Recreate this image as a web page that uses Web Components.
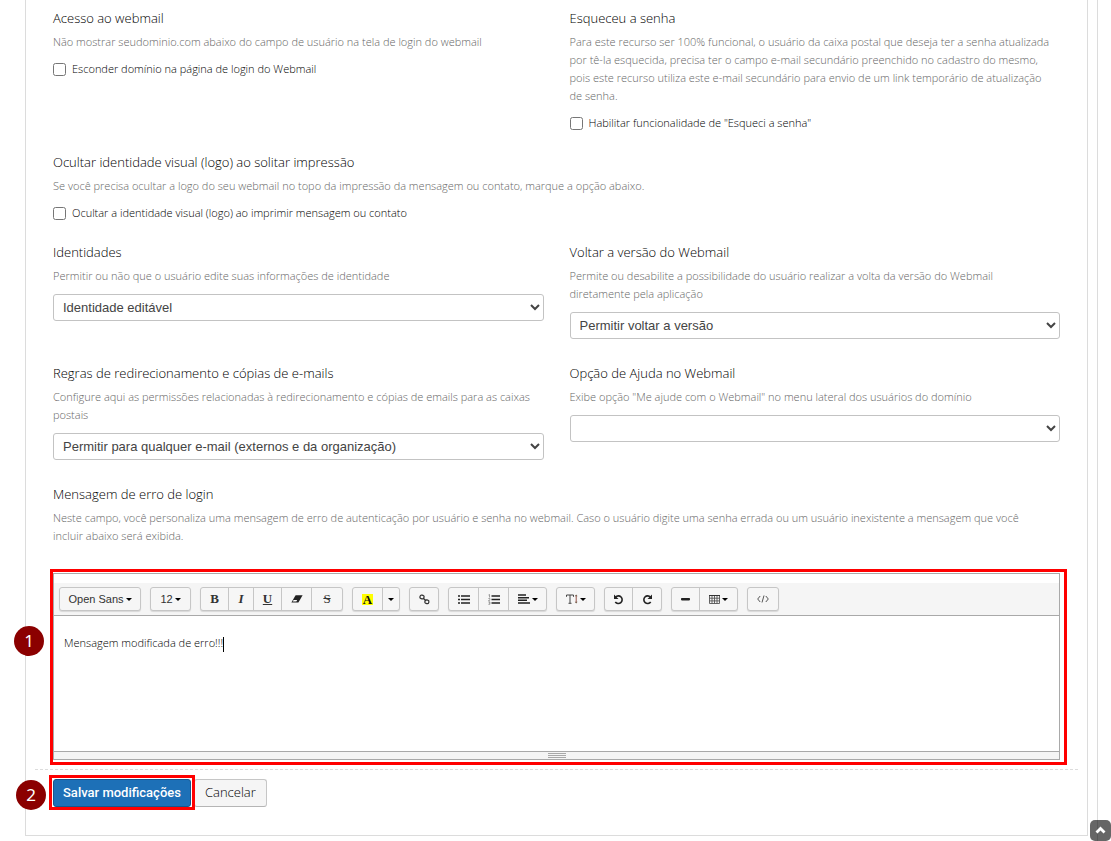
<!DOCTYPE html>
<html lang="pt-BR">
<head>
<meta charset="utf-8">
<meta name="viewport" content="width=device-width, initial-scale=1">
<title>Configurações do Webmail</title>
<style>
  body { margin: 0; background: #fff; color: #000; font: 300 11px/18px "Open Sans", sans-serif; }
</style>
</head>
<body>
<settings-page>
  <settings-row>
    <check-setting heading="Acesso ao webmail" help="Não mostrar seudominio.com abaixo do campo de usuário na tela de login do webmail" option="Esconder domínio na página de login do Webmail"></check-setting>
    <check-setting heading="Esqueceu a senha" help="Para este recurso ser 100% funcional, o usuário da caixa postal que deseja ter a senha atualizada por tê-la esquecida, precisa ter o campo e-mail secundário preenchido no cadastro do mesmo, pois este recurso utiliza este e-mail secundário para envio de um link temporário de atualização de&nbsp;senha." option='Habilitar funcionalidade de "Esqueci a senha"'></check-setting>
  </settings-row>
  <settings-row single>
    <check-setting heading="Ocultar identidade visual (logo) ao solitar impressão" help="Se você precisa ocultar a logo do seu webmail no topo da impressão da mensagem ou contato, marque a opção abaixo." option="Ocultar a identidade visual (logo) ao imprimir mensagem ou contato"></check-setting>
  </settings-row>
  <settings-row spaced>
    <select-setting heading="Identidades" help="Permitir ou não que o usuário edite suas informações de identidade" option="Identidade editável"></select-setting>
    <select-setting heading="Voltar a versão do Webmail" help="Permite ou desabilite a possibilidade do usuário realizar a volta da versão do Webmail diretamente&nbsp;pela aplicação" option="Permitir voltar a versão"></select-setting>
  </settings-row>
  <settings-row spaced>
    <select-setting heading="Regras de redirecionamento e cópias de e-mails" help="Configure aqui as permissões relacionadas à redirecionamento e cópias de emails para as caixas postais" option="Permitir para qualquer e-mail (externos e da organização)"></select-setting>
    <select-setting heading="Opção de Ajuda no Webmail" help='Exibe opção "Me ajude com o Webmail" no menu lateral dos usuários do domínio' option=""></select-setting>
  </settings-row>
  <settings-row spaced single>
    <text-setting heading="Mensagem de erro de login" help="Neste campo, você personaliza uma mensagem de erro de autenticação por usuário e senha no webmail. Caso o usuário digite uma senha errada ou um usuário inexistente a mensagem que você incluir&nbsp;abaixo será exibida.">
      <rich-editor>Mensagem modificada de erro!!!</rich-editor>
    </text-setting>
  </settings-row>
  <form-actions slot="actions"></form-actions>
</settings-page>

<script>
const define = (name, html, setup) => {
  const template = document.createElement('template');
  template.innerHTML = html;
  customElements.define(name, class extends HTMLElement {
    constructor() {
      super();
      this.attachShadow({ mode: 'open' }).append(template.content.cloneNode(true));
    }
    connectedCallback() { if (setup) setup(this, this.shadowRoot); }
  });
};

define('settings-page', `
  <style>
    :host { display: block; box-sizing: border-box; min-height: 100vh; margin-right: 13px; padding: 0 9px 5px 25px; border-right: 1px solid #dcdcdc; }
    main { border: 1px solid #dcdcdc; border-top: 0; padding: 9px 9px 28px; }
    .rows { padding: 0 18px; }
  </style>
  <main><div class="rows"><slot></slot></div><slot name="actions"></slot></main>
  <back-to-top></back-to-top>`);

define('back-to-top', `
  <style>
    :host { position: fixed; right: 0; bottom: 0; }
    button { display: block; width: 21px; height: 21px; padding: 0; border: 0; border-radius: 5px; background: rgb(0 0 0 / 60%); }
    svg { display: block; margin: auto; }
  </style>
  <button type="button" aria-label="Voltar ao topo"><svg width="13" height="12" viewBox="0 0 13 12"><path d="M2.5 7.5l4-4 4 4" fill="none" stroke="#fff" stroke-width="2.8"/></svg></button>`);

define('settings-row', `
  <style>
    :host { display: grid; grid-template-columns: 1fr 1fr; column-gap: 26px; margin-bottom: 21px; }
    :host([spaced]) { margin-bottom: 25px; }
    :host([single]) { grid-template-columns: 1fr; }
    :host(:last-of-type) { margin-bottom: 0; }
  </style>
  <slot></slot>`);

const blockStyle = `
    :host { display: block; min-width: 0; }
    .title { display: block; margin: 0 0 6px; font-size: 13px; line-height: 18px; font-weight: 300; color: #000; }
    p { margin: 0; color: #666; }`;

const fill = (host, root) => {
  for (const key of ['heading', 'help', 'option']) {
    const node = root.querySelector('[data-' + key + ']');
    if (node) node.textContent = host.getAttribute(key);
  }
};

define('check-setting', `
  <style>${blockStyle}
    .option { display: flex; align-items: center; gap: 6px; height: 18px; margin-top: 9px; color: #000; }
    input { width: 13px; height: 13px; margin: 0; }
  </style>
  <h2 class="title" data-heading></h2>
  <p data-help></p>
  <div class="option"><input type="checkbox" id="option"><label for="option" data-option></label></div>`, fill);

define('select-setting', `
  <style>${blockStyle}
    select { display: block; box-sizing: border-box; width: 100%; height: 27px; margin-top: 9px; padding: 0 5px 1px; border: 1px solid #c3c3c3; border-radius: 3px; background-color: #fff; color: #444; font: 13px "Liberation Sans", Arial, sans-serif; }
  </style>
  <label class="title" for="choice" data-heading></label>
  <p data-help></p>
  <select id="choice"><option data-option></option></select>`, fill);

define('text-setting', `
  <style>${blockStyle}
    .field { margin-top: 28px; }
  </style>
  <h2 class="title" data-heading></h2>
  <p data-help></p>
  <div class="field"><slot></slot></div>`, fill);

define('step-badge', `
  <style>
    :host { display: grid; place-items: center; width: 30px; height: 30px; border-radius: 50%; background: #8b0000; color: #fff; font: 17px/30px "Noto Sans", sans-serif; }
  </style>
  <slot></slot>`);

define('tool-group', `
  <style>
    :host { display: flex; height: 24px; box-sizing: border-box; border: 1px solid #c6c6c6; border-radius: 3px; background: #f6f6f6; box-shadow: 0 1px 1px rgb(0 0 0 / 12%); }
  </style>
  <slot></slot>`);

define('tool-button', `
  <style>
    :host { display: block; box-sizing: border-box; }
    :host(:not(:last-child)) { border-right: 1px solid #c6c6c6; }
    :host([w="16"]) { width: 16px; } :host([w="25"]) { width: 25px; } :host([w="28"]) { width: 28px; } :host([w="30"]) { width: 30px; }
    :host([w="37"]) { width: 37px; } :host([w="39"]) { width: 39px; } :host([w="80"]) { width: 80px; }
    button { display: flex; align-items: center; justify-content: center; gap: 2px; width: 100%; height: 22px; padding: 0; border: 0; background: none; color: #333; font: 11px "Liberation Sans", Arial, sans-serif; white-space: nowrap; }
    :host([serif]) button { font: bold 13px "Liberation Serif", serif; }
    :host([menu]) button::after { content: ""; border: 3px solid transparent; border-top-color: #000; border-bottom: 0; }
  </style>
  <button type="button"><slot></slot></button>`, (host, root) => {
    if (host.title) root.querySelector('button').setAttribute('aria-label', host.title);
  });

define('rich-editor', `
  <style>
    :host { display: block; position: relative; border: 1px solid #a9a9a9; }
    .toolbar { display: flex; flex-wrap: wrap; gap: 9px; margin-top: 9px; padding: 4px 5px; background: #f5f5f5; border-bottom: 1px solid #a9a9a9; }
    .content { min-height: 117px; padding: 18px 10px 0; outline: 0; color: #000; }
    .caret { display: inline-block; width: 1px; height: 15px; vertical-align: middle; background: #000; }
    .grip { display: flex; flex-direction: column; align-items: center; gap: 1px; height: 6px; padding-top: 1px; border-top: 1px solid #a9a9a9; background: #f5f5f5; }
    .grip i { width: 18px; height: 1px; background: #a9a9a9; }
    .frame { position: absolute; inset: -5px -8px -6px -4px; border: 3px solid #f00; pointer-events: none; }
    step-badge { position: absolute; left: -40px; top: 52px; }
    svg { display: block; }
    .italic { font-style: italic; }
    .mark { background: #ff0; color: #111; padding: 0 1px; line-height: 11px; }
    .regular { font-weight: 400; }
  </style>
  <div class="toolbar" role="toolbar">
    <tool-group><tool-button w="80" menu>Open Sans</tool-button></tool-group>
    <tool-group><tool-button w="39" menu>12</tool-button></tool-group>
    <tool-group>
      <tool-button w="28" serif>B</tool-button>
      <tool-button w="25" serif><span class="italic">I</span></tool-button>
      <tool-button w="28" serif><u>U</u></tool-button>
      <tool-button w="30" title="Limpar formatação"><svg width="12" height="8" viewBox="0 0 12 8"><path d="M4.6 .3h7L7.4 7.5H.4z" fill="#222"/><path d="M2.6 5h3.6L5.3 6.6H1.7z" fill="#fff"/></svg></tool-button>
      <tool-button w="30" serif><s class="regular">S</s></tool-button>
    </tool-group>
    <tool-group>
      <tool-button w="30" serif><span class="mark">A</span></tool-button>
      <tool-button w="16" menu title="Cores"></tool-button>
    </tool-group>
    <tool-group><tool-button w="28" title="Link"><svg width="11" height="11" viewBox="0 0 11 11" fill="none" stroke="#333" stroke-width="1.2"><rect x="1" y="1.2" width="4" height="3.6" rx="1.5" transform="rotate(15 3 3)"/><rect x="5.8" y="6" width="4" height="3.6" rx="1.5" transform="rotate(15 8 8)"/><path d="M4 4l3.2 3"/></svg></tool-button></tool-group>
    <tool-group>
      <tool-button w="30" title="Lista"><svg width="12" height="9" viewBox="0 0 12 9"><path d="M0 1h2M0 4.5h2M0 8h2M3 1h9M3 4.5h9M3 8h9" stroke="#222" stroke-width="1.6"/></svg></tool-button>
      <tool-button w="30" title="Lista numerada"><svg width="12" height="11" viewBox="0 0 12 11"><path d="M3.5 2H12M3.5 5.5H12M3.5 9H12" stroke="#222" stroke-width="1.5"/><path d="M.5 1l1-.5v3M.4 4.5h1.4v1L.5 6.8h1.6M.4 8h1.5v2.3H.4M1 9h.8" fill="none" stroke="#777" stroke-width=".7"/></svg></tool-button>
      <tool-button w="37" menu title="Parágrafo"><svg width="12" height="10" viewBox="0 0 12 10"><path d="M0 1h8M0 3.7h11M0 6.3h9M0 9h12" stroke="#222" stroke-width="1.5"/></svg></tool-button>
    </tool-group>
    <tool-group><tool-button w="37" menu title="Altura da linha"><svg width="12" height="10" viewBox="0 0 12 10"><path d="M.5 2.8V1h7v1.8M4 1v8M2.5 9.3h3" fill="none" stroke="#444"/><path d="M10.2 1v8" stroke="#985349"/><path d="M8.8 2.3L10.2.5l1.4 1.8zM8.8 7.7l1.4 1.8 1.4-1.8z" fill="#765"/></svg></tool-button></tool-group>
    <tool-group>
      <tool-button w="28" title="Desfazer"><svg width="11" height="11" viewBox="0 0 11 11"><path d="M2.5 3.2A3.8 3.8 0 1 1 2.3 8" fill="none" stroke="#222" stroke-width="1.6"/><path d="M1 .5V5h4.5z" fill="#222"/></svg></tool-button>
      <tool-button w="28" title="Refazer"><svg width="11" height="11" viewBox="0 0 11 11"><path d="M8.5 3.2A3.8 3.8 0 1 0 8.7 8" fill="none" stroke="#222" stroke-width="1.6"/><path d="M10 .5V5H5.5z" fill="#222"/></svg></tool-button>
    </tool-group>
    <tool-group>
      <tool-button w="28" title="Linha horizontal"><svg width="9" height="3" viewBox="0 0 9 3"><rect width="9" height="2.4" rx=".8" fill="#222"/></svg></tool-button>
      <tool-button w="37" menu title="Tabela"><svg width="11" height="9" viewBox="0 0 11 9"><path d="M.5.5h10v8H.5zM.5 3.2h10M.5 5.9h10M3 1v7.5M5.5 1v7.5M8 1v7.5" fill="none" stroke="#555" stroke-width=".9"/><path d="M0 .5h11" stroke="#333"/></svg></tool-button>
    </tool-group>
    <tool-group><tool-button w="30" title="Código"><svg width="12" height="8" viewBox="0 0 12 8"><path d="M3.2 1L.7 4l2.5 3M8.8 1l2.5 3-2.5 3M7 .5l-2 7" fill="none" stroke="#555"/></svg></tool-button></tool-group>
  </div>
  <div class="content" contenteditable="true" role="textbox" aria-label="Mensagem de erro de login" spellcheck="false"><slot></slot><span class="caret"></span></div>
  <div class="grip"><i></i><i></i><i></i></div>
  <div class="frame"></div>
  <step-badge>1</step-badge>`);

define('form-actions', `
  <style>
    :host { display: flex; gap: 3px; margin-top: 9px; padding: 9px 18px 0; border-top: 1px dashed #dcdcdc; }
    .save { position: relative; }
    button { display: block; box-sizing: border-box; height: 28px; padding: 0 10px 2px; border: 1px solid #c6c6c6; border-bottom-color: #b5b5b5; border-radius: 3px; background: #f5f5f5; color: #000; font: 300 13px/18px "Open Sans", sans-serif; }
    .save button { padding: 0 9px; border-color: #17568c; background: #1d70b7; color: #fff; font: 500 13px/18px Roboto, sans-serif; }
    .frame { position: absolute; inset: -4px -4px -3px; border: 3px solid #f00; pointer-events: none; }
    step-badge { position: absolute; left: -37px; top: 1px; }
  </style>
  <div class="save"><button type="submit">Salvar modificações</button><div class="frame"></div><step-badge>2</step-badge></div>
  <button type="button">Cancelar</button>`);
</script>
</body>
</html>
